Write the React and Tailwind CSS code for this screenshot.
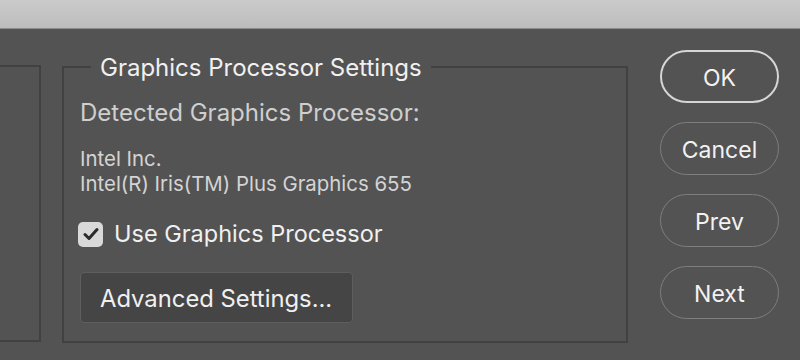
import React, { useState } from "react";

const font = { fontFamily: "Inter, 'Noto Sans', sans-serif" };

const SideButton = ({ label, primary }) => (
  <button
    className={`w-[119px] h-[53px] rounded-full pt-[3px] text-[23px] text-[#f2f2f2] bg-transparent ${
      primary ? "border-2 border-[#d6d6d6]" : "border-[1.5px] border-[#7e7e7e]"
    }`}
  >
    {label}
  </button>
);

const App = () => {
  const [useGpu, setUseGpu] = useState(true);

  return (
    <div className="w-[800px] h-[360px] bg-[#535353] overflow-hidden" style={font}>
      {/* window title strip */}
      <div className="h-[29px] bg-gradient-to-b from-[#cbcbcb] to-[#bcbcbc] border-b border-[#8c8c8c]" />

      <div className="flex items-start pt-[21px]">
        {/* previous panel, mostly off screen */}
        <div className="w-[41px] h-[277px] mt-[15px] border-t-2 border-r-2 border-b-2 border-[#414141] shrink-0" />

        <fieldset className="w-[566px] ml-[21px] mt-[1px] border-2 border-[#414141] pl-[16px] pr-4 pt-[15px] pb-[18px] shrink-0">
          <legend className="ml-[11px] px-[9px] pt-[2px] text-[24px] leading-[30px] text-[#f0f0f0]">
            Graphics Processor Settings
          </legend>

          <div className="text-[24px] leading-[30px] text-[#cfcfcf]">
            Detected Graphics Processor:
          </div>

          <div className="mt-[18px] text-[20.4px] leading-[25px] text-[#d4d4d4]">
            <div>Intel Inc.</div>
            <div>Intel(R) Iris(TM) Plus Graphics 655</div>
          </div>

          <label className="mt-[23px] flex items-center gap-[11px] cursor-pointer -ml-[2px]">
            <span
              onClick={() => setUseGpu(!useGpu)}
              className="w-[25px] h-[25px] rounded-[5px] bg-[#d9d9d9] flex items-center justify-center"
            >
              {useGpu && (
                <svg width="16" height="14" viewBox="0 0 16 14">
                  <path
                    d="M2 7.5 L6 11.5 L14 2.5"
                    fill="none"
                    stroke="#2b2b2b"
                    strokeWidth="3"
                    strokeLinecap="round"
                    strokeLinejoin="round"
                  />
                </svg>
              )}
            </span>
            <span className="text-[23.5px] leading-[30px] text-[#f0f0f0]">Use Graphics Processor</span>
          </label>

          <button className="mt-[23px] w-[273px] h-[51px] rounded-[4px] bg-[#454545] border border-[#5e5e5e] text-left pl-[19px] pt-[2px] text-[23.8px] text-[#f0f0f0]">
            Advanced Settings...
          </button>
        </fieldset>

        <div className="ml-[32px] flex flex-col gap-[19px] shrink-0">
          <SideButton label="OK" primary />
          <SideButton label="Cancel" />
          <SideButton label="Prev" />
          <SideButton label="Next" />
        </div>
      </div>
    </div>
  );
};

export default App;
